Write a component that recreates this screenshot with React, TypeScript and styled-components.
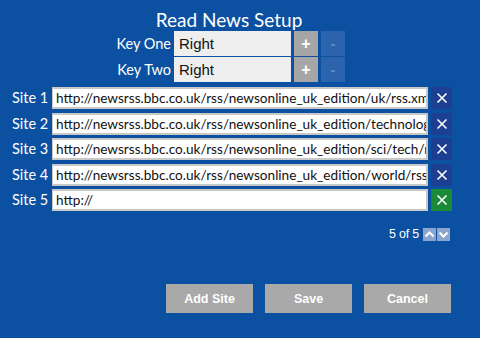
import React from "react";
import styled, { createGlobalStyle } from "styled-components";

const GlobalStyle = createGlobalStyle`
  html, body {
    margin: 0;
    padding: 0;
    background: #0b50a1;
  }
`;

const Page = styled.div`
  width: 480px;
  height: 338px;
  box-sizing: border-box;
  padding: 8px 28px 0 12px;
  background: #0b50a1;
  display: flex;
  flex-direction: column;
  font-family: Lato, "Noto Sans", sans-serif;
  color: #ffffff;
  overflow: hidden;
`;

const Title = styled.h1`
  margin: 0;
  height: 23px;
  text-align: center;
  font-weight: 400;
  font-size: 19px;
  line-height: 23px;
  padding-right: 6px;
`;

const KeyGrid = styled.div`
  display: grid;
  grid-template-columns: 58px 117px 24px 24px;
  column-gap: 3px;
  row-gap: 1px;
  margin-left: 101px;
  align-items: center;
`;

const KeyLabel = styled.div`
  text-align: right;
  font-size: 14.5px;
  line-height: 25px;
`;

const KeyInput = styled.div`
  height: 25px;
  box-sizing: border-box;
  background: #eeeeee;
  color: #111;
  font-family: "Liberation Sans", Arial, sans-serif;
  font-size: 15px;
  line-height: 25px;
  padding-left: 5px;
`;

const KeyButton = styled.div<{ $active?: boolean }>`
  height: 25px;
  background: ${(p) => (p.$active ? "#a6a6a6" : "#2c63ad")};
  color: ${(p) => (p.$active ? "#ffffff" : "#5d88c4")};
  font-family: "Liberation Sans", Arial, sans-serif;
  font-weight: 700;
  font-size: 16px;
  line-height: 25px;
  text-align: center;
`;

const SiteList = styled.div`
  margin-top: 5px;
  display: flex;
  flex-direction: column;
  gap: 3.5px;
`;

const SiteRow = styled.div`
  display: grid;
  grid-template-columns: 37px 376px 21px;
  column-gap: 3px;
  height: 22px;
  align-items: center;
`;

const SiteLabel = styled.div`
  font-size: 14.5px;
  line-height: 22px;
  white-space: nowrap;
`;

const SiteInput = styled.div`
  height: 22px;
  box-sizing: border-box;
  border: 2px solid #c8c8c8;
  border-left-width: 1px;
  background: #ffffff;
  color: #111;
  font-size: 13.6px;
  line-height: 18px;
  padding-left: 3px;
  white-space: nowrap;
  overflow: hidden;
`;

const RemoveButton = styled.div<{ $isNew?: boolean }>`
  height: 22px;
  background: ${(p) => (p.$isNew ? "#1a8a36" : "#1d3f91")};
  display: flex;
  align-items: center;
  justify-content: center;
`;

const Pager = styled.div`
  margin-top: 16px;
  display: flex;
  justify-content: flex-end;
  align-items: center;
  gap: 1px;
  font-family: "Liberation Sans", Arial, sans-serif;
  font-size: 12.5px;
  height: 14px;
  padding-right: 2px;
`;

const PagerText = styled.span`
  margin-right: 3px;
  letter-spacing: -0.2px;
`;

const ArrowButton = styled.div`
  width: 13px;
  height: 13px;
  background: #8aa6ce;
  display: flex;
  align-items: center;
  justify-content: center;
`;

const Actions = styled.div`
  margin-top: 43px;
  display: flex;
  justify-content: flex-end;
  gap: 12px;
  padding-right: 1px;
`;

const ActionButton = styled.button`
  width: 87px;
  height: 29px;
  border: none;
  background: #a9a9a9;
  color: #ffffff;
  font-family: "Liberation Sans", Arial, sans-serif;
  font-weight: 700;
  font-size: 12.5px;
  padding: 0;
`;

const Cross = () => (
  <svg width="12" height="12" viewBox="0 0 12 12">
    <path d="M1.5 1.5 L10.5 10.5 M10.5 1.5 L1.5 10.5" stroke="#ffffff" strokeWidth="1.6" />
  </svg>
);

const Chevron = ({ up }: { up?: boolean }) => (
  <svg width="11" height="9" viewBox="0 0 11 9">
    <path
      d={up ? "M1.5 6.5 L5.5 2.5 L9.5 6.5" : "M1.5 2.5 L5.5 6.5 L9.5 2.5"}
      stroke="#ffffff"
      strokeWidth="2"
      fill="none"
    />
  </svg>
);

const keys = [
  { label: "Key One", value: "Right" },
  { label: "Key Two", value: "Right" },
];

const sites = [
  "http://newsrss.bbc.co.uk/rss/newsonline_uk_edition/uk/rss.xml",
  "http://newsrss.bbc.co.uk/rss/newsonline_uk_edition/technology/rss.xml",
  "http://newsrss.bbc.co.uk/rss/newsonline_uk_edition/sci/tech/rss.xml",
  "http://newsrss.bbc.co.uk/rss/newsonline_uk_edition/world/rss.xml",
  "http://",
];

const App = () => {
  return (
    <Page>
      <GlobalStyle />
      <Title>Read News Setup</Title>
      <KeyGrid>
        {keys.map((k) => (
          <React.Fragment key={k.label}>
            <KeyLabel>{k.label}</KeyLabel>
            <KeyInput>{k.value}</KeyInput>
            <KeyButton $active>+</KeyButton>
            <KeyButton>-</KeyButton>
          </React.Fragment>
        ))}
      </KeyGrid>
      <SiteList>
        {sites.map((url, i) => (
          <SiteRow key={i}>
            <SiteLabel>Site {i + 1}</SiteLabel>
            <SiteInput>{url}</SiteInput>
            <RemoveButton $isNew={i === sites.length - 1}>
              <Cross />
            </RemoveButton>
          </SiteRow>
        ))}
      </SiteList>
      <Pager>
        <PagerText>5 of 5</PagerText>
        <ArrowButton>
          <Chevron up />
        </ArrowButton>
        <ArrowButton>
          <Chevron />
        </ArrowButton>
      </Pager>
      <Actions>
        <ActionButton>Add Site</ActionButton>
        <ActionButton>Save</ActionButton>
        <ActionButton>Cancel</ActionButton>
      </Actions>
    </Page>
  );
};

export default App;
